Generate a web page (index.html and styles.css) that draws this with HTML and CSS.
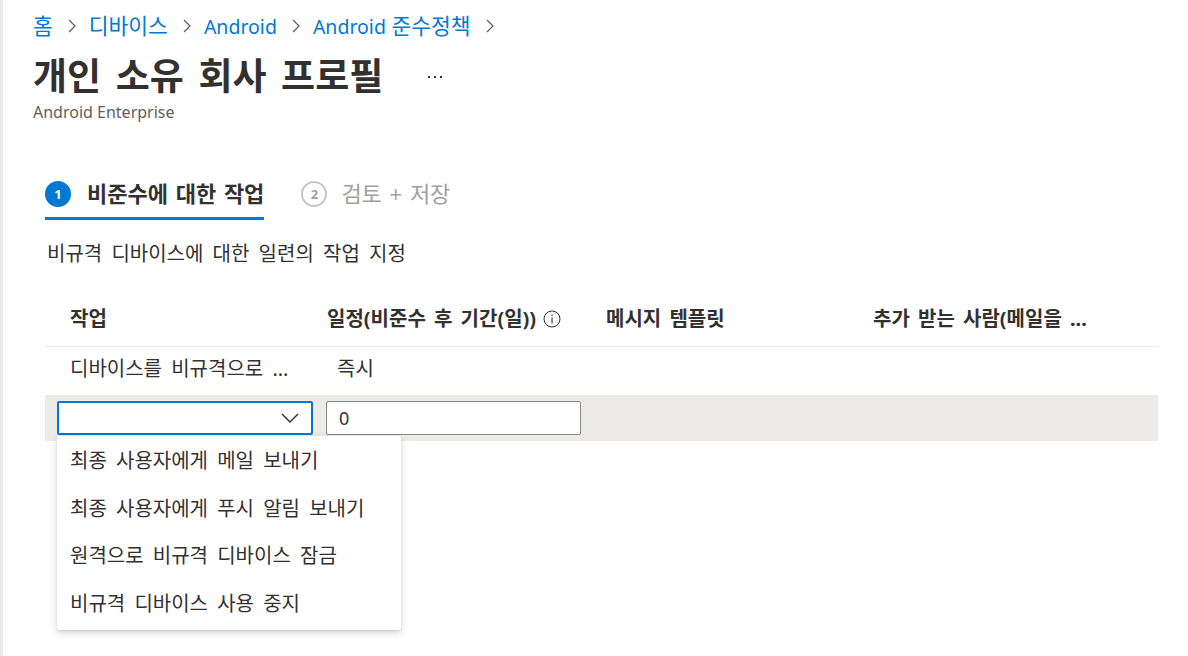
FILE: index.html
```html
<!DOCTYPE html>
<html lang="ko">
<head>
<meta charset="utf-8">
<title>개인 소유 회사 프로필</title>
<link rel="stylesheet" href="styles.css">
</head>
<body>
<div class="page">
  <nav class="breadcrumb">
    <a class="crumb">홈</a>
    <svg class="sep" width="8" height="14" viewBox="0 0 8 14"><path d="M1 1 L7 7 L1 13" fill="none" stroke="#605e5c" stroke-width="1.2"/></svg>
    <a class="crumb">디바이스</a>
    <svg class="sep" width="8" height="14" viewBox="0 0 8 14"><path d="M1 1 L7 7 L1 13" fill="none" stroke="#605e5c" stroke-width="1.2"/></svg>
    <a class="crumb"><span class="lat">Android</span></a>
    <svg class="sep" width="8" height="14" viewBox="0 0 8 14"><path d="M1 1 L7 7 L1 13" fill="none" stroke="#605e5c" stroke-width="1.2"/></svg>
    <a class="crumb"><span class="lat">Android</span> 준수정책</a>
    <svg class="sep" width="8" height="14" viewBox="0 0 8 14"><path d="M1 1 L7 7 L1 13" fill="none" stroke="#605e5c" stroke-width="1.2"/></svg>
  </nav>
  <div class="title-row">
    <h1 class="title">개인 소유 회사 프로필</h1>
    <svg class="more" width="16" height="4" viewBox="0 0 16 4"><rect x="1" y="1" width="2" height="2" fill="#323130"/><rect x="7" y="1" width="2" height="2" fill="#323130"/><rect x="13" y="1" width="2" height="2" fill="#323130"/></svg>
  </div>
  <div class="subtitle">Android Enterprise</div>

  <section class="content">
    <div class="tabs">
      <div class="tab active"><span class="step">1</span><span class="tab-label">비준수에 대한 작업</span></div>
      <div class="tab"><span class="step">2</span><span class="tab-label">검토 + 저장</span></div>
    </div>

    <p class="desc">비규격 디바이스에 대한 일련의 작업 지정</p>

    <div class="table">
      <div class="row head">
        <div class="cell c1">작업</div>
        <div class="cell c2">일정(비준수 후 기간(일))
          <svg class="info" width="18" height="18" viewBox="0 0 18 18"><circle cx="9" cy="9" r="8" fill="none" stroke="#323130" stroke-width="1"/><rect x="8.5" y="7.5" width="1.1" height="6" fill="#323130"/><circle cx="9.05" cy="5.3" r="0.8" fill="#323130"/></svg>
        </div>
        <div class="cell c3">메시지 템플릿</div>
        <div class="cell c4">추가 받는 사람(메일을 ...</div>
      </div>
      <div class="row data">
        <div class="cell c1">디바이스를 비규격으로 ...</div>
        <div class="cell c2 imm">즉시</div>
        <div class="cell"></div>
        <div class="cell"></div>
      </div>
      <div class="row edit">
        <div class="cell ctl">
          <div class="select">
            <svg class="chev" width="18" height="10" viewBox="0 0 18 10"><path d="M1 1 L9 9 L17 1" fill="none" stroke="#323130" stroke-width="1.4"/></svg>
          </div>
          <ul class="menu">
            <li>최종 사용자에게 메일 보내기</li>
            <li>최종 사용자에게 푸시 알림 보내기</li>
            <li>원격으로 비규격 디바이스 잠금</li>
            <li>비규격 디바이스 사용 중지</li>
          </ul>
        </div>
        <div class="cell ctl">
          <div class="input">0</div>
        </div>
        <div class="cell"></div>
        <div class="cell"></div>
      </div>
    </div>
  </section>
</div>
</body>
</html>
```

FILE: styles.css
```css
* { box-sizing: border-box; }
html, body { margin: 0; padding: 0; background: #fff; }
body {
  font-family: "Noto Sans", "Noto Sans CJK KR", sans-serif;
  color: #323130;
  word-spacing: 4px;
}
.page {
  min-height: 656px;
  border-left: 3px solid #e8e8e8;
  padding: 14px 30px 0 30px;
}
.breadcrumb {
  display: flex;
  align-items: center;
  height: 24px;
  font-size: 21.5px;
  line-height: 24px;
  word-spacing: 0;
}
.crumb { color: #0078d4; white-space: nowrap; }
.lat { font-size: 19.5px; }
.sep { margin: 0 13px 0 15px; flex: none; }
.title-row {
  display: flex;
  align-items: center;
  margin-top: 16px;
  height: 44px;
}
.title {
  margin: 0;
  font-size: 37px;
  line-height: 44px;
  font-weight: 700;
  word-spacing: 5px;
  white-space: nowrap;
}
.more { margin-left: 44px; margin-top: 2px; flex: none; }
.subtitle {
  margin-top: 3px;
  font-size: 16px;
  line-height: 22px;
  color: #605e5c;
  word-spacing: 0;
}
.content { padding-left: 12px; }
.tabs {
  display: flex;
  margin-top: 46px;
  gap: 37px;
}
.tab {
  display: flex;
  align-items: center;
  height: 51px;
  border-bottom: 3px solid transparent;
  font-size: 22px;
  color: #a19f9d;
  word-spacing: 2px;
}
.tab.active {
  border-bottom-color: #0078d4;
  color: #323130;
  font-weight: 700;
}
.step {
  width: 26px;
  height: 26px;
  border-radius: 50%;
  border: 2px solid #c8c6c4;
  color: #a19f9d;
  font-size: 13px;
  font-weight: 700;
  display: flex;
  align-items: center;
  justify-content: center;
  margin-right: 16px;
  word-spacing: 0;
  margin-top: 1px;
}
.tab.active .step {
  background: #0078d4;
  border-color: #0078d4;
  color: #fff;
}
.tab:not(.active) .step { margin-right: 14px; }
.tab-label { line-height: 24px; white-space: nowrap; }
.desc {
  margin: 22px 0 0 2px;
  font-size: 20px;
  line-height: 24px;
}
.table { margin-top: 28px; width: 1113px; }
.row {
  display: grid;
  grid-template-columns: 269px 280px 267px 1fr;
  padding-left: 12px;
}
.cell { font-size: 20px; line-height: 24px; white-space: nowrap; }
.head {
  padding: 13px 0 15px 12px;
  border-bottom: 1px solid #edebe9;
  font-weight: 700;
  word-spacing: 3px;
}
.head .c1 { padding-left: 13px; }
.head .c2 { padding-left: 1px; display: flex; align-items: center; }
.info { margin-left: 7px; flex: none; }
.data { padding: 10px 0 14px 12px; }
.data .c1 { padding-left: 13px; }
.data .imm { padding-left: 11px; }
.edit {
  background: #edebe9;
  padding: 6px 0 6px 12px;
}
.ctl { position: relative; }
.select {
  width: 256px;
  height: 34px;
  background: #fff;
  border: 2px solid #0078d4;
  border-radius: 2px;
  display: flex;
  align-items: center;
  justify-content: flex-end;
  padding-right: 12px;
}
.input {
  width: 255px;
  height: 34px;
  background: #fff;
  border: 1px solid #8a8886;
  border-radius: 2px;
  padding-left: 12px;
  line-height: 32px;
  font-size: 18px;
}
.menu {
  position: absolute;
  top: 35px;
  left: 0;
  width: 344px;
  margin: 0;
  padding: 1px 0 3px 0;
  list-style: none;
  background: #fff;
  border-radius: 2px;
  box-shadow: 0 3px 8px rgba(0,0,0,0.16), 0 1px 2px rgba(0,0,0,0.1);
  z-index: 2;
}
.menu li {
  height: 47.5px;
  line-height: 47.5px;
  padding-left: 13px;
  font-size: 20px;
  color: #323130;
}
```
